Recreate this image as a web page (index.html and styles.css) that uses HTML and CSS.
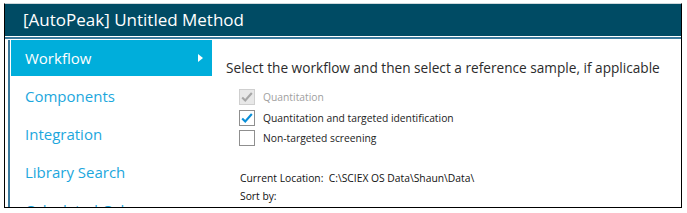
FILE: index.html
```html
<!DOCTYPE html>
<html>
<head>
<meta charset="utf-8">
<link rel="stylesheet" href="styles.css">
</head>
<body>
<div class="window">
  <div class="titlebar">[AutoPeak] Untitled Method</div>
  <div class="rule"></div>
  <div class="main">
    <nav class="sidebar">
      <div class="nav-item active"><span>Workflow</span><span class="arrow"></span></div>
      <div class="nav-item">Components</div>
      <div class="nav-item">Integration</div>
      <div class="nav-item">Library Search</div>
      <div class="nav-item">Calculated Columns</div>
    </nav>
    <section class="content">
      <div class="heading">Select the workflow and then select a reference sample, if applicable</div>
      <div class="checks">
        <div class="check disabled">
          <span class="box"><svg viewBox="0 0 16 16" width="16" height="16"><path d="M2.5 8.5 L6 12 L13.5 3.5" fill="none" stroke="#a6a6a6" stroke-width="2.4"/></svg></span>
          <span>Quantitation</span>
        </div>
        <div class="check">
          <span class="box"><svg viewBox="0 0 16 16" width="16" height="16"><path d="M2.5 8.5 L6 12 L13.5 3.5" fill="none" stroke="#0a8fd8" stroke-width="2.4"/></svg></span>
          <span>Quantitation and targeted identification</span>
        </div>
        <div class="check">
          <span class="box"></span>
          <span>Non-targeted screening</span>
        </div>
      </div>
      <div class="location">Current Location:&nbsp; C:\SCIEX OS Data\Shaun\Data\</div>
      <div class="sort">Sort by:</div>
    </section>
  </div>
</div>
</body>
</html>
```
FILE: styles.css
```css
html, body {
  margin: 0;
  padding: 0;
  background: #ffffff;
  overflow: hidden;
}
body {
  font-family: "Open Sans", "Noto Sans", sans-serif;
}
.window {
  margin: 3px 0 0 4px;
  width: 676px;
  height: 203px;
  border: 1px solid #000;
  border-top-color: #cfd8dc;
  display: flex;
  flex-direction: column;
  overflow: hidden;
}
.titlebar {
  height: 32px;
  background: #004b64;
  color: #ffffff;
  font-size: 17px;
  line-height: 32px;
  padding-left: 18px;
  flex: none;
}
.rule {
  height: 2px;
  border-top: 1px solid #fff;
  border-bottom: 1px solid #fff;
  background: #3b7a9c;
  flex: none;
}
.main {
  flex: 1;
  display: flex;
  min-height: 0;
}
.sidebar {
  width: 201px;
  margin-left: 3px;
  border-left: 2px solid #3b7a9c;
  padding-left: 1px;
  flex: none;
  display: flex;
  flex-direction: column;
  gap: 2px;
}
.nav-item {
  height: 36px;
  line-height: 36px;
  padding-left: 14px;
  font-size: 15px;
  color: #1ca7dd;
  flex: none;
  display: flex;
  align-items: center;
  white-space: nowrap;
}
.nav-item.active {
  background: #00aedb;
  color: #ffffff;
  justify-content: space-between;
  padding-right: 9px;
}
.arrow {
  width: 0;
  height: 0;
  border-top: 4px solid transparent;
  border-bottom: 4px solid transparent;
  border-left: 5px solid #ffffff;
}
.content {
  flex: 1;
  padding-left: 14px;
  color: #333;
}
.heading {
  margin-top: 18px;
  font-size: 13.65px;
  color: #2b2b2b;
  white-space: nowrap;
}
.checks {
  margin-top: 12px;
  margin-left: 13px;
  display: flex;
  flex-direction: column;
  gap: 4.5px;
}
.check {
  display: flex;
  align-items: center;
  gap: 8px;
  font-size: 10.3px;
  color: #222;
  height: 16px;
}
.check.disabled {
  color: #a0a0a0;
}
.box {
  width: 14px;
  height: 14px;
  border: 1px solid #8f8f8f;
  background: #fff;
  display: flex;
  align-items: center;
  justify-content: center;
  flex: none;
}
.box svg {
  width: 14px;
  height: 14px;
}
.check.disabled .box {
  background: #e8e8e8;
  border-color: #cfcfcf;
}
.location {
  margin-top: 25px;
  margin-left: 14px;
  font-size: 10.3px;
  color: #111;
  white-space: nowrap;
}
.sort {
  margin-top: 4px;
  margin-left: 14px;
  font-size: 10.3px;
  color: #111;
}
```
